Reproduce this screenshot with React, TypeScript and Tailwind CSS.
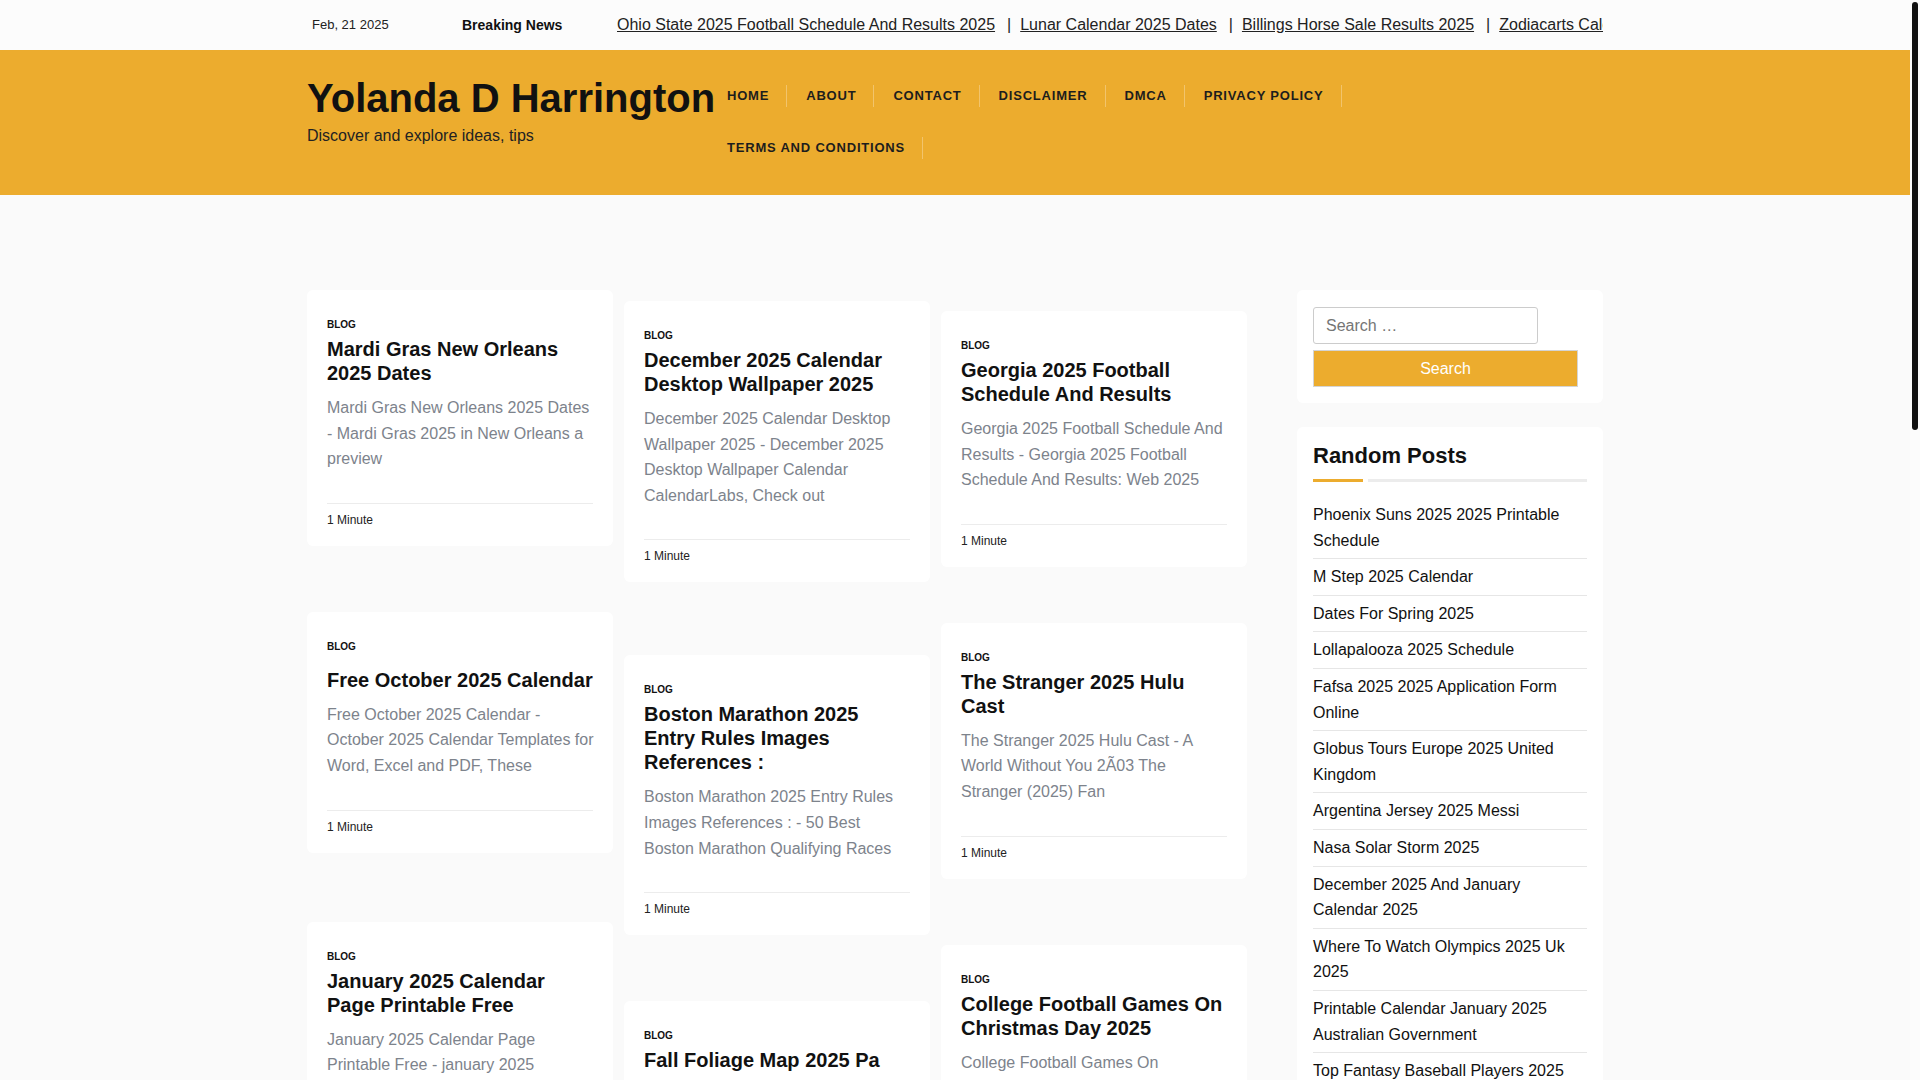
import React from 'react';

interface Post {
  title: string;
  excerpt: string;
  mt: string;
  titleGap?: string;
}

const TICKER = [
  'Ohio State 2025 Football Schedule And Results 2025',
  'Lunar Calendar 2025 Dates',
  'Billings Horse Sale Results 2025',
  'Zodiacarts Calendar 2025',
];

const NAV = ['Home', 'About', 'Contact', 'Disclaimer', 'DMCA', 'Privacy Policy', 'Terms and Conditions'];

const COLUMNS: Post[][] = [
  [
    {
      title: 'Mardi Gras New Orleans 2025 Dates',
      excerpt: 'Mardi Gras New Orleans 2025 Dates - Mardi Gras 2025 in New Orleans a preview',
      mt: 'mt-0',
    },
    {
      title: 'Free October 2025 Calendar',
      excerpt: 'Free October 2025 Calendar - October 2025 Calendar Templates for Word, Excel and PDF, These',
      mt: 'mt-[66px]',
      titleGap: 'mt-[15px]',
    },
    {
      title: 'January 2025 Calendar Page Printable Free',
      excerpt: 'January 2025 Calendar Page Printable Free - january 2025 calendar free printable',
      mt: 'mt-[69px]',
    },
  ],
  [
    {
      title: 'December 2025 Calendar Desktop Wallpaper 2025',
      excerpt:
        'December 2025 Calendar Desktop Wallpaper 2025 - December 2025 Desktop Wallpaper Calendar CalendarLabs, Check out',
      mt: 'mt-[11px]',
    },
    {
      title: 'Boston Marathon 2025 Entry Rules Images References :',
      excerpt: 'Boston Marathon 2025 Entry Rules Images References : - 50 Best Boston Marathon Qualifying Races',
      mt: 'mt-[73px]',
    },
    {
      title: 'Fall Foliage Map 2025 Pa',
      excerpt: 'Fall Foliage Map 2025 Pa - Fall foliage 2025 map for Pennsylvania',
      mt: 'mt-[66px]',
    },
  ],
  [
    {
      title: 'Georgia 2025 Football Schedule And Results',
      excerpt:
        'Georgia 2025 Football Schedule And Results - Georgia 2025 Football Schedule And Results: Web 2025',
      mt: 'mt-[21px]',
    },
    {
      title: 'The Stranger 2025 Hulu Cast',
      excerpt: 'The Stranger 2025 Hulu Cast - A World Without You 2Ã03 The Stranger (2025) Fan',
      mt: 'mt-[56px]',
    },
    {
      title: 'College Football Games On Christmas Day 2025',
      excerpt: 'College Football Games On Christmas Day 2025 - College football on Christmas',
      mt: 'mt-[66px]',
    },
  ],
];

const RANDOM = [
  'Phoenix Suns 2025 2025 Printable Schedule',
  'M Step 2025 Calendar',
  'Dates For Spring 2025',
  'Lollapalooza 2025 Schedule',
  'Fafsa 2025 2025 Application Form Online',
  'Globus Tours Europe 2025 United Kingdom',
  'Argentina Jersey 2025 Messi',
  'Nasa Solar Storm 2025',
  'December 2025 And January Calendar 2025',
  'Where To Watch Olympics 2025 Uk 2025',
  'Printable Calendar January 2025 Australian Government',
  'Top Fantasy Baseball Players 2025',
];

function PostCard({ post }: { post: Post }) {
  return (
    <article className={`${post.mt} rounded-md bg-white pt-[29px] pr-[18px] pb-[17px] pl-5`}>
      <div className="text-[10px] leading-[12px] font-bold text-[#111]">BLOG</div>
      <h2 className={`${post.titleGap ?? 'mt-[6px]'} text-[20px] leading-[24px] font-bold text-[#111]`}>
        {post.title}
      </h2>
      <p className="mt-[10px] text-[16px] leading-[25.6px] text-[#7d838c]">{post.excerpt}</p>
      <div className="mt-[31px] mr-[2px] border-t border-[#ececec] pt-[7px] text-[12px] leading-[18px] text-[#222]">
        1 Minute
      </div>
    </article>
  );
}

export default function App() {
  return (
    <div className="min-h-screen bg-[#fafafa] pr-[10px] font-['Liberation_Sans',Arial,sans-serif] text-[#222]">
      {/* top bar */}
      <div className="bg-[#fcfcfc]">
        <div className="mx-auto flex h-[50px] w-[1296px] items-center">
          <div className="w-[155px] shrink-0 pl-[5px] text-[13px]">Feb, 21 2025</div>
          <div className="w-[155px] shrink-0 text-[14px] font-bold text-[#111]">Breaking News</div>
          <div className="flex-1 overflow-hidden whitespace-nowrap text-[16px]">
            {TICKER.map((t, i) => (
              <span key={t}>
                {i > 0 && <span className="ml-[12px] mr-[9px]">|</span>}
                <a href="#" className="text-[#222] underline">
                  {t}
                </a>
              </span>
            ))}
          </div>
        </div>
      </div>

      {/* header */}
      <header className="bg-[#ecac2e]">
        <div className="mx-auto flex h-[145px] w-[1296px] items-start">
          <div className="mt-[24px] w-[420px] shrink-0">
            <div className="text-[40px] leading-[48px] font-bold text-[#111]">Yolanda D Harrington</div>
            <div className="mt-[2px] text-[16px] leading-[24px] text-[#222]">Discover and explore ideas, tips</div>
          </div>
          <nav className="mt-[20px] flex w-[760px] flex-wrap">
            {NAV.map((n) => (
              <div key={n} className="flex h-[52px] items-center">
                <a
                  href="#"
                  className="mr-[19px] border-r border-[#f2c46c] pr-[17px] text-[13px] leading-[22px] font-bold tracking-[0.8px] text-[#1d1d1d] uppercase"
                >
                  {n}
                </a>
              </div>
            ))}
          </nav>
        </div>
      </header>

      {/* main */}
      <main className="mx-auto flex w-[1296px] items-start gap-[50px] pt-[95px] pb-10">
        <div className="grid w-[940px] shrink-0 grid-cols-3 items-start gap-[11px]">
          {COLUMNS.map((col, ci) => (
            <div key={ci} className="flex flex-col">
              {col.map((p) => (
                <PostCard key={p.title} post={p} />
              ))}
            </div>
          ))}
        </div>

        <aside className="flex w-[306px] shrink-0 flex-col gap-[24px]">
          <div className="rounded-md bg-white pt-[17px] pb-[16px] pl-4">
            <input
              type="search"
              placeholder="Search …"
              className="block h-[37px] w-[225px] rounded-[3px] border border-[#cccccc] px-3 text-[16px] text-[#222] placeholder:text-[#757575] outline-none"
            />
            <button className="mt-[6px] block h-[37px] w-[265px] border border-[#d4d4d4] bg-[#ecac2e] text-[16px] text-white">
              Search
            </button>
          </div>

          <div className="rounded-md bg-white px-4 pt-4 pb-4">
            <h3 className="text-[22px] leading-[26px] font-bold text-[#111]">Random Posts</h3>
            <div className="mt-[10px] flex h-[3px] gap-[5px]">
              <div className="w-[50px] bg-[#ecac2e]" />
              <div className="flex-1 bg-[#ececec]" />
            </div>
            <ul className="mt-[15px]">
              {RANDOM.map((r) => (
                <li key={r} className="border-b border-[#e6e6e6] py-[5px] text-[16px] leading-[25.6px] text-[#111]">
                  <a href="#">{r}</a>
                </li>
              ))}
            </ul>
          </div>
        </aside>
      </main>

      {/* scrollbar thumb */}
      <div className="fixed top-0 right-0 h-screen w-[10px] bg-[#fcfcfc]">
        <div className="mt-[2px] ml-[2px] h-[428px] w-[6px] rounded-full bg-[#111]" />
      </div>
    </div>
  );
}
